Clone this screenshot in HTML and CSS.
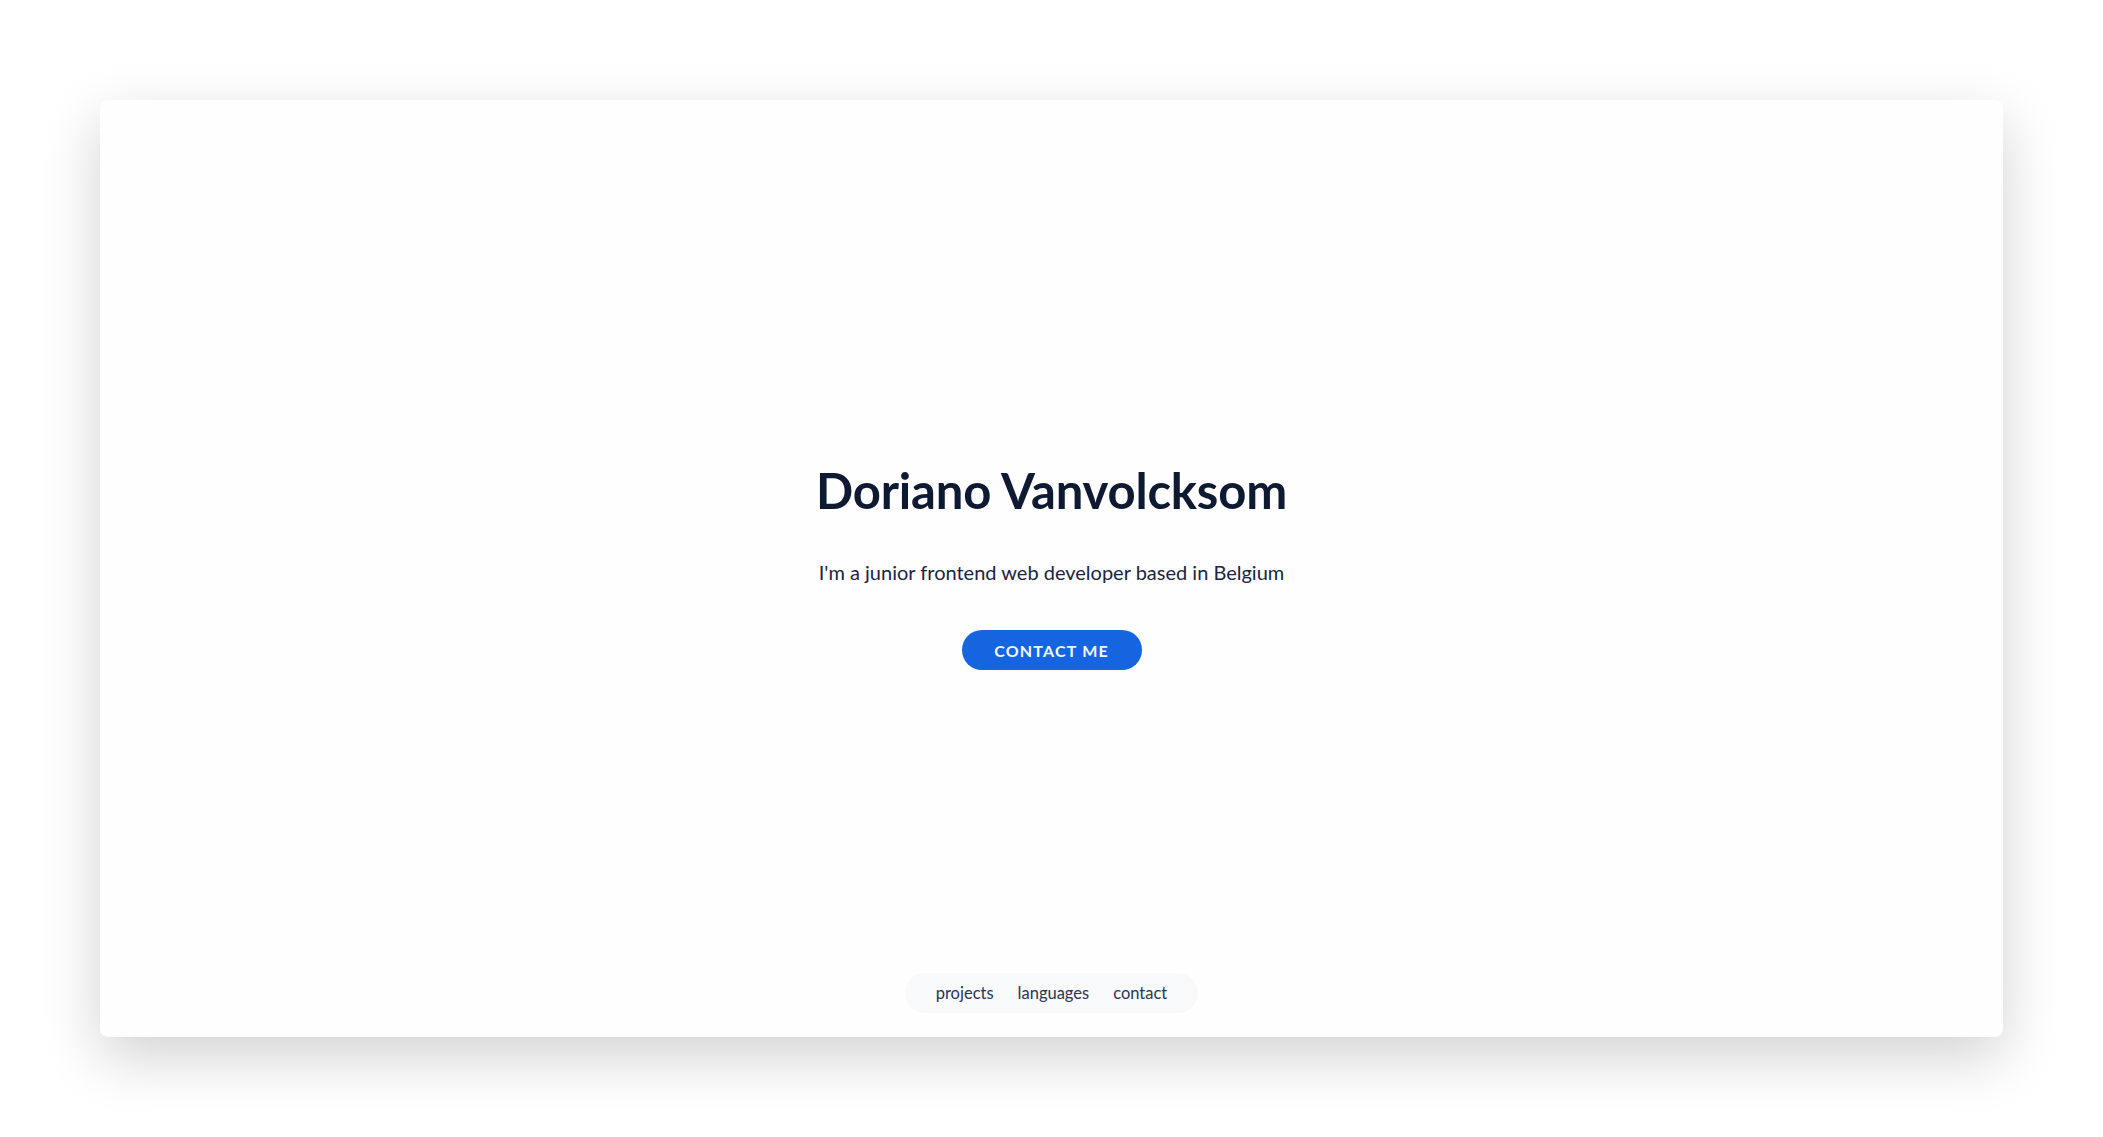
FILE: index.html
```html
<!DOCTYPE html>
<html lang="en">
<head>
<meta charset="utf-8">
<title>Doriano Vanvolcksom</title>
<link rel="stylesheet" href="styles.css">
</head>
<body>
<div class="card">
  <div class="spacer"></div>
  <main class="hero">
    <h1 class="hero-title">Doriano Vanvolcksom</h1>
    <p class="hero-sub">I'm a junior frontend web developer based in Belgium</p>
    <a class="hero-btn" href="#contact">CONTACT ME</a>
  </main>
  <div class="nav-row">
    <nav class="nav">
      <a href="#projects">projects</a>
      <a href="#languages">languages</a>
      <a href="#contact">contact</a>
    </nav>
  </div>
</div>
</body>
</html>
```
FILE: styles.css
```css
html, body {
  margin: 0;
  height: 100%;
  background: #ffffff;
}
body {
  box-sizing: border-box;
  padding: 100px;
  font-family: "Lato", "Noto Sans", sans-serif;
  color: #0f1a33;
}
.card {
  height: 100%;
  box-sizing: border-box;
  background: #fefefe;
  border-radius: 8px;
  box-shadow: 0 20px 60px rgba(0, 0, 0, 0.18);
  display: grid;
  grid-template-rows: 1fr auto 1fr;
  justify-items: center;
}
.hero {
  display: flex;
  flex-direction: column;
  align-items: center;
  padding-bottom: 7px;
}
.hero-title {
  margin: 0;
  font-size: 49px;
  font-weight: 700;
  line-height: 60px;
  color: #0e1a32;
  letter-spacing: -0.2px;
}
.hero-sub {
  margin: 38px 0 0;
  font-size: 20px;
  line-height: 28px;
  color: #1a2540;
}
.hero-btn {
  margin-top: 44px;
  display: flex;
  align-items: center;
  justify-content: center;
  width: 180px;
  height: 40px;
  border-radius: 20px;
  background: #1565e0;
  color: #f4f7fd;
  font-size: 16px;
  font-weight: 700;
  letter-spacing: 1.2px;
  text-decoration: none;
}
.nav-row {
  align-self: end;
  padding-bottom: 24px;
}
.nav {
  display: flex;
  gap: 24px;
  height: 40px;
  align-items: center;
  padding: 0 31px;
  border-radius: 20px;
  background: #f8f9fb;
}
.nav a {
  font-size: 16.5px;
  color: #2b3550;
  text-decoration: none;
}
```
